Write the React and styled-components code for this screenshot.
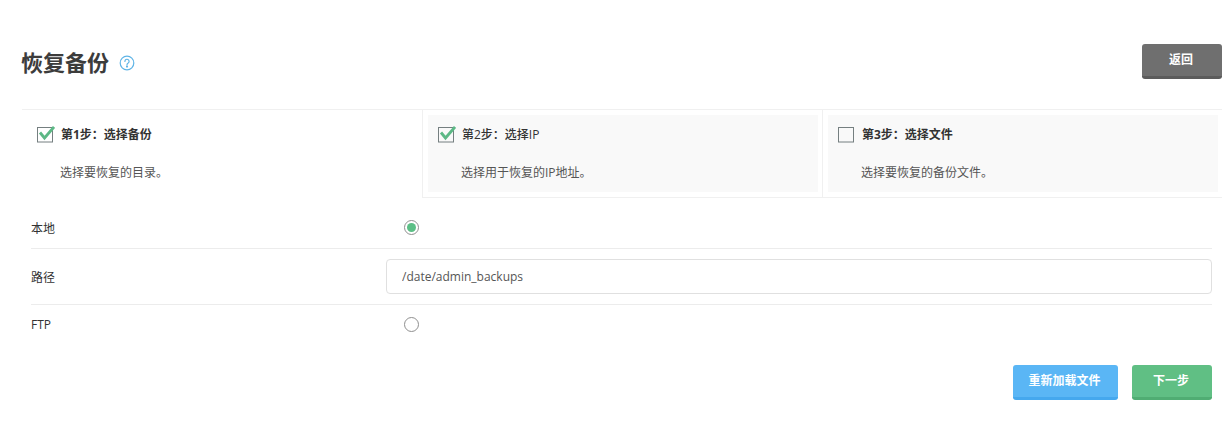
import React from "react";
import styled, { createGlobalStyle } from "styled-components";

const Global = createGlobalStyle`
  html, body { margin: 0; padding: 0; background: #fff; }
  body { font-family: "Open Sans", "Noto Sans CJK SC", sans-serif; color: #333; }
`;

const Page = styled.div`
  width: 1231px;
  height: 421px;
  box-sizing: border-box;
  padding: 44px 9px 0 22px;
  overflow: hidden;
`;

const Header = styled.header`
  display: flex;
  justify-content: space-between;
  align-items: flex-start;
  height: 65px;
  border-bottom: 1px solid #f0f0f0;
`;

const TitleWrap = styled.div`
  display: flex;
  align-items: center;
  gap: 10px;
  height: 36px;
`;

const Title = styled.h1`
  margin: 0 0 0 -1px;
  font-size: 22px;
  line-height: 36px;
  font-weight: 700;
  color: #3c3c3c;
`;

const HelpIcon = styled.svg`
  margin-top: 2px;
`;

const BaseButton = styled.button`
  height: 35px;
  border: 0;
  border-radius: 3px;
  padding: 0 2px 0 0;
  color: #fff;
  font: 700 12px/32px "Open Sans", "Noto Sans CJK SC", sans-serif;
`;

const BackButton = styled(BaseButton)`
  width: 80px;
  background: #6f6f6f;
  border-bottom: 3px solid #5c5c5c;
`;

const Steps = styled.div`
  display: grid;
  grid-template-columns: 401px 400px 399px;
  height: 88px;
`;

const Step = styled.div`
  box-sizing: border-box;
  height: 88px;
  padding: ${(p) => (p.$boxed ? "5px 4px 5px 5px" : "0")};
  border-right: ${(p) => (p.$divider ? "1px solid #f0f0f0" : "0")};
  border-bottom: ${(p) => (p.$boxed ? "1px solid #f0f0f0" : "0")};
`;

const StepInner = styled.div`
  box-sizing: border-box;
  height: 77px;
  padding: ${(p) => (p.$boxed ? "10px 0 0 10px" : "15px 0 0 15px")};
  background: ${(p) => (p.$boxed ? "#f9f9f9" : "#fff")};
`;

const StepHead = styled.div`
  display: flex;
  align-items: center;
  gap: 6px;
  height: 18px;
  font-size: 12px;
  font-weight: ${(p) => p.$weight};
  color: #333;
`;

const StepDesc = styled.p`
  margin: 21px 0 0 23px;
  font-size: 12px;
  line-height: 18px;
  color: #555;
`;

const Form = styled.div`
  margin: 9px 10px 0 9px;
`;

const Row = styled.div`
  box-sizing: border-box;
  display: grid;
  grid-template-columns: 355px 1fr;
  align-items: center;
  height: ${(p) => p.$h}px;
  border-bottom: ${(p) => (p.$line ? "1px solid #ececec" : "0")};
`;

const Label = styled.label`
  font-size: 12px;
  color: #333;
`;

const RadioCell = styled.div`
  padding-left: 18px;
  display: flex;
  align-items: center;
`;

const Radio = styled.span`
  box-sizing: border-box;
  width: 15px;
  height: 15px;
  border-radius: 50%;
  border: 1px solid #8f8f8f;
  background: #fff;
  display: flex;
  align-items: center;
  justify-content: center;
  &::after {
    content: "";
    width: 9px;
    height: 9px;
    border-radius: 50%;
    background: ${(p) => (p.$on ? "#5cbf86" : "transparent")};
  }
`;

const PathInput = styled.input`
  box-sizing: border-box;
  width: 826px;
  height: 35px;
  padding: 0 15px;
  border: 1px solid #e0e0e0;
  border-radius: 4px;
  font: 12px "Open Sans", sans-serif;
  color: #555;
  outline: none;
`;

const Actions = styled.div`
  display: flex;
  justify-content: flex-end;
  gap: 14px;
  margin-top: 21px;
`;

const ReloadButton = styled(BaseButton)`
  width: 105px;
  background: #5ab6f5;
  border-bottom: 3px solid #45a8ee;
`;

const NextButton = styled(BaseButton)`
  width: 80px;
  background: #60bf84;
  border-bottom: 3px solid #50ad73;
`;

const Check = ({ on }) => (
  <svg width="18" height="18" viewBox="0 0 18 18" fill="none">
    <rect x="0.5" y="2.5" width="15" height="14.5" fill="none" stroke="#757f80" strokeWidth="1" />
    {on && <path d="M3 7.5 L7.5 13 L17 2" stroke="#5cb885" strokeWidth="2.8" fill="none" />}
  </svg>
);

const Help = () => (
  <HelpIcon width="16" height="16" viewBox="0 0 16 16" fill="none" stroke="#5fb4e6" strokeWidth="1.2">
    <circle cx="8" cy="8" r="6.8" />
    <path d="M5.9 6.4a2.1 2.1 0 1 1 3.3 1.7c-.8.5-1.2.9-1.2 1.8" strokeLinecap="round" />
    <circle cx="8" cy="11.6" r=".5" fill="#5fb4e6" />
  </HelpIcon>
);

const steps = [
  { title: "第1步：选择备份", desc: "选择要恢复的目录。", on: true, boxed: false, weight: 700 },
  { title: "第2步：选择IP", desc: "选择用于恢复的IP地址。", on: true, boxed: true, weight: 500 },
  { title: "第3步：选择文件", desc: "选择要恢复的备份文件。", on: false, boxed: true, weight: 700 },
];

export default function App() {
  return (
    <Page>
      <Global />
      <Header>
        <TitleWrap>
          <Title>恢复备份</Title>
          <Help />
        </TitleWrap>
        <BackButton>返回</BackButton>
      </Header>
      <Steps>
        {steps.map((s, i) => (
          <Step key={s.title} $boxed={s.boxed} $divider={i < 2}>
            <StepInner $boxed={s.boxed}>
              <StepHead $weight={s.weight}>
                <Check on={s.on} />
                {s.title}
              </StepHead>
              <StepDesc>{s.desc}</StepDesc>
            </StepInner>
          </Step>
        ))}
      </Steps>
      <Form>
        <Row $h={42} $line>
          <Label>本地</Label>
          <RadioCell><Radio $on /></RadioCell>
        </Row>
        <Row $h={56} $line>
          <Label>路径</Label>
          <PathInput defaultValue="/date/admin_backups" />
        </Row>
        <Row $h={39}>
          <Label>FTP</Label>
          <RadioCell><Radio /></RadioCell>
        </Row>
        <Actions>
          <ReloadButton>重新加载文件</ReloadButton>
          <NextButton>下一步</NextButton>
        </Actions>
      </Form>
    </Page>
  );
}
